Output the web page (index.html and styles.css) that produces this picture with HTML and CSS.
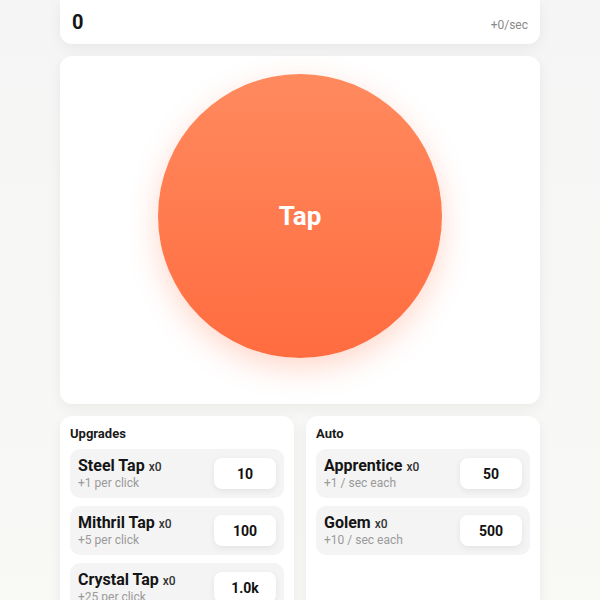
FILE: index.html
```html
<!DOCTYPE html>
<html>
<head>
<meta charset="utf-8">
<link rel="stylesheet" href="styles.css">
</head>
<body>
<div class="app">
  <div class="card score">
    <div class="count">0</div>
    <div class="rate">+0/sec</div>
  </div>
  <div class="card stage">
    <button class="tap">Tap</button>
  </div>
  <div class="shops">
    <div class="card panel">
      <div class="panel-title">Upgrades</div>
      <div class="items">
        <div class="item">
          <div class="info">
            <div class="name">Steel Tap <span class="qty">x0</span></div>
            <div class="desc">+1 per click</div>
          </div>
          <button class="buy">10</button>
        </div>
        <div class="item">
          <div class="info">
            <div class="name">Mithril Tap <span class="qty">x0</span></div>
            <div class="desc">+5 per click</div>
          </div>
          <button class="buy">100</button>
        </div>
        <div class="item">
          <div class="info">
            <div class="name">Crystal Tap <span class="qty">x0</span></div>
            <div class="desc">+25 per click</div>
          </div>
          <button class="buy">1.0k</button>
        </div>
      </div>
    </div>
    <div class="card panel">
      <div class="panel-title">Auto</div>
      <div class="items">
        <div class="item">
          <div class="info">
            <div class="name">Apprentice <span class="qty">x0</span></div>
            <div class="desc">+1 / sec each</div>
          </div>
          <button class="buy">50</button>
        </div>
        <div class="item">
          <div class="info">
            <div class="name">Golem <span class="qty">x0</span></div>
            <div class="desc">+10 / sec each</div>
          </div>
          <button class="buy">500</button>
        </div>
      </div>
    </div>
  </div>
</div>
</body>
</html>
```

FILE: styles.css
```css
html, body {
  margin: 0;
  padding: 0;
}
body {
  font-family: Roboto, "Liberation Sans", sans-serif;
  background: linear-gradient(180deg, #f5f5f5 0%, #f9f9f6 100%);
  min-height: 600px;
  color: #151515;
}
.app {
  width: 480px;
  margin: 0 auto;
  display: flex;
  flex-direction: column;
  gap: 12px;
  padding-bottom: 40px;
}
.card {
  background: #ffffff;
  border-radius: 12px;
  box-shadow: 0 4px 14px rgba(0, 0, 0, 0.06);
}
.score {
  border-radius: 0 0 12px 12px;
  display: flex;
  justify-content: space-between;
  align-items: baseline;
  padding: 10px 12px 10px 12px;
}
.count {
  font-size: 20px;
  font-weight: 700;
  line-height: 24px;
}
.rate {
  font-size: 12px;
  color: #8a8a8a;
}
.stage {
  display: flex;
  justify-content: center;
  padding: 18px 0 46px;
}
.tap {
  width: 284px;
  height: 284px;
  border-radius: 50%;
  border: none;
  background: linear-gradient(180deg, #ff8a5e 0%, #ff6c40 100%);
  box-shadow: 0 10px 30px rgba(255, 112, 64, 0.28);
  color: #ffffff;
  font-family: Roboto, "Liberation Sans", sans-serif;
  font-size: 26px;
  font-weight: 700;
  cursor: pointer;
}
.shops {
  display: grid;
  grid-template-columns: 1fr 1fr;
  gap: 12px;
}
.panel {
  padding: 10px;
  min-height: 220px;
}
.panel-title {
  font-size: 13px;
  font-weight: 700;
  line-height: 16px;
  margin-bottom: 7px;
  color: #1a1a1a;
}
.items {
  display: flex;
  flex-direction: column;
  gap: 8px;
}
.item {
  background: #f4f4f4;
  border-radius: 10px;
  padding: 8px;
  display: flex;
  align-items: center;
  justify-content: space-between;
}
.name {
  font-size: 16px;
  font-weight: 700;
  line-height: 18px;
  color: #151515;
}
.qty {
  font-size: 12px;
  font-weight: 500;
  color: #333;
}
.desc {
  font-size: 12px;
  line-height: 14px;
  color: #9a9a9a;
}
.buy {
  width: 62px;
  height: 31px;
  border: none;
  border-radius: 8px;
  background: #ffffff;
  box-shadow: 0 2px 6px rgba(0, 0, 0, 0.07);
  font-family: Roboto, "Liberation Sans", sans-serif;
  font-size: 14px;
  font-weight: 700;
  color: #111;
  cursor: pointer;
}
```
